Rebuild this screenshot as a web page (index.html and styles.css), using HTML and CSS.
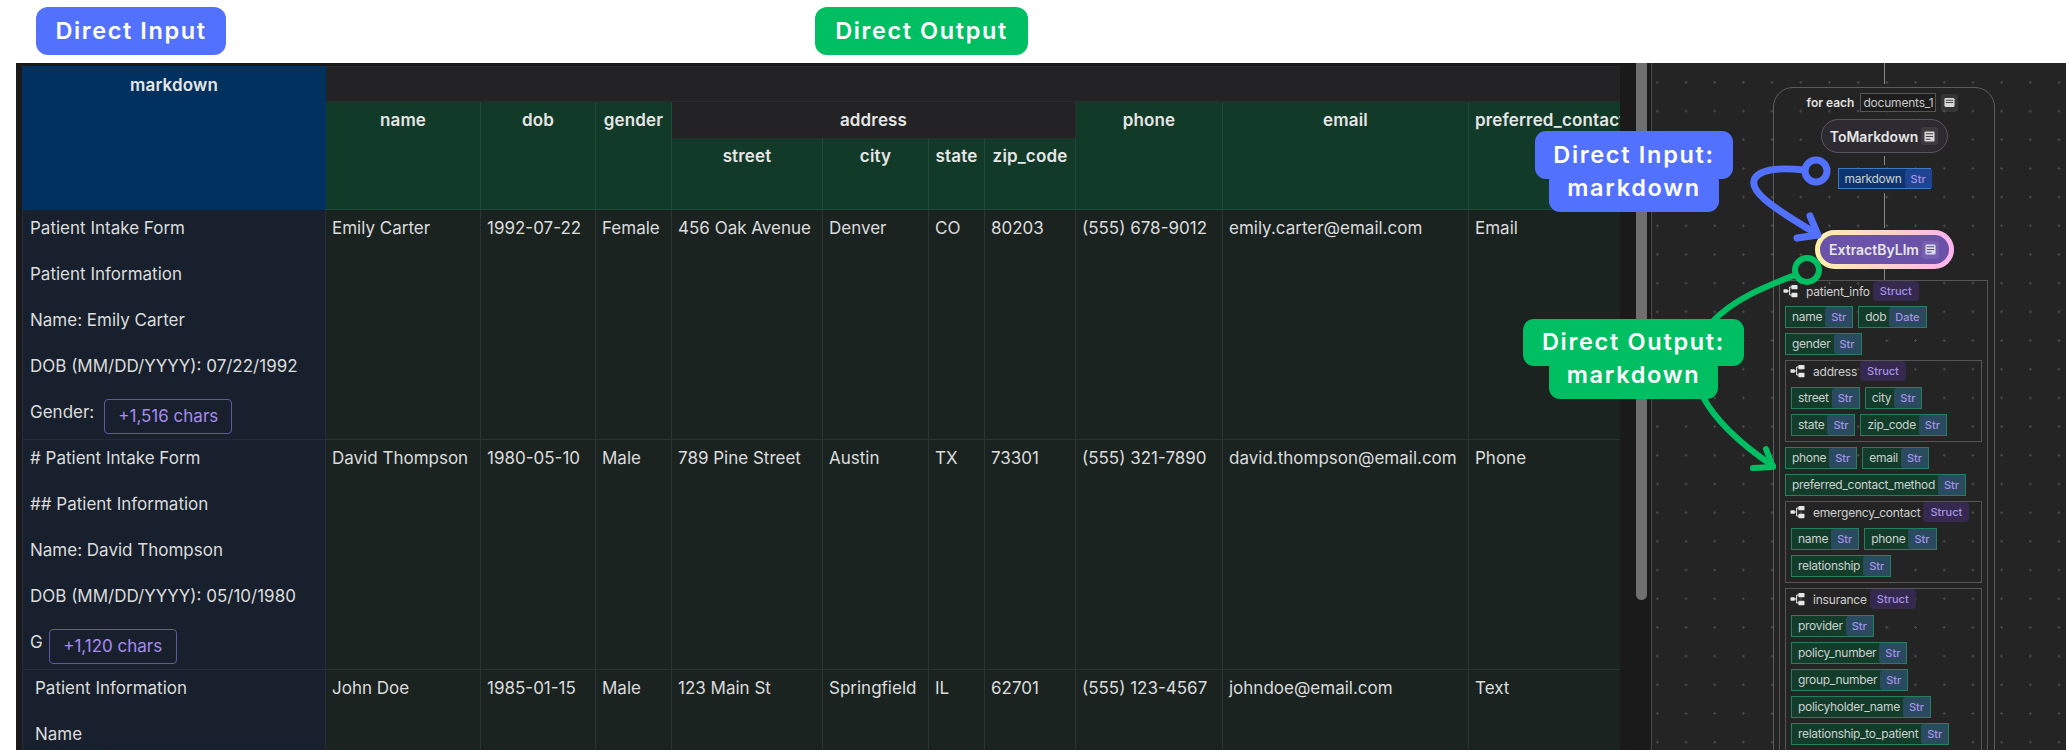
FILE: index.html
```html
<!DOCTYPE html>
<html lang="en">
<head>
  <meta charset="UTF-8" />
  <meta name="viewport" content="width=device-width, initial-scale=1.0" />
  <title>Direct Input and Direct Output</title>

  <link rel="stylesheet" href="styles.css">
</head>
<body>
<!-- Labels above the screenshot -->
<header class="labels">
  <span class="label label-input">Direct Input</span>
  <span class="label label-output">Direct Output</span>
</header>

<main class="app">
  <!-- Results table -->
  <section class="table-pane">
    <table class="results">
      <colgroup>
        <col class="col-markdown">
        <col class="col-name">
        <col class="col-dob">
        <col class="col-gender">
        <col class="col-street">
        <col class="col-city">
        <col class="col-state">
        <col class="col-zip">
        <col class="col-phone">
        <col class="col-email">
        <col class="col-preferred">
      </colgroup>
      <thead>
        <tr class="head-1">
          <th rowspan="3" class="th-input">markdown</th>
          <th colspan="10" class="th-group"></th>
        </tr>
        <tr class="head-2">
          <th rowspan="2" class="th-output">name</th>
          <th rowspan="2" class="th-output">dob</th>
          <th rowspan="2" class="th-output">gender</th>
          <th colspan="4" class="th-group">address</th>
          <th rowspan="2" class="th-output">phone</th>
          <th rowspan="2" class="th-output">email</th>
          <th rowspan="2" class="th-output">preferred_contact_method</th>
        </tr>
        <tr class="head-3">
          <th class="th-output">street</th>
          <th class="th-output">city</th>
          <th class="th-output">state</th>
          <th class="th-output">zip_code</th>
        </tr>
      </thead>
      <tbody>
        <tr class="row-full">
          <td class="td-input">
            <p>Patient Intake Form</p>
            <p>Patient Information</p>
            <p>Name: Emily Carter</p>
            <p>DOB (MM/DD/YYYY): 07/22/1992</p>
            <p>Gender:<span class="more more-wide">+1,516 chars</span></p>
          </td>
          <td>Emily Carter</td>
          <td>1992-07-22</td>
          <td>Female</td>
          <td>456 Oak Avenue</td>
          <td>Denver</td>
          <td>CO</td>
          <td>80203</td>
          <td>(555) 678-9012</td>
          <td>emily.carter@email.com</td>
          <td>Email</td>
        </tr>
        <tr class="row-full">
          <td class="td-input">
            <p># Patient Intake Form</p>
            <p>## Patient Information</p>
            <p>Name: David Thompson</p>
            <p>DOB (MM/DD/YYYY): 05/10/1980</p>
            <p>G<span class="more">+1,120 chars</span></p>
          </td>
          <td>David Thompson</td>
          <td>1980-05-10</td>
          <td>Male</td>
          <td>789 Pine Street</td>
          <td>Austin</td>
          <td>TX</td>
          <td>73301</td>
          <td>(555) 321-7890</td>
          <td>david.thompson@email.com</td>
          <td>Phone</td>
        </tr>
        <tr>
          <td class="td-input td-indent">
            <p>Patient Information</p>
            <p>Name</p>
          </td>
          <td>John Doe</td>
          <td>1985-01-15</td>
          <td>Male</td>
          <td>123 Main St</td>
          <td>Springfield</td>
          <td>IL</td>
          <td>62701</td>
          <td>(555) 123-4567</td>
          <td>johndoe@email.com</td>
          <td>Text</td>
        </tr>
      </tbody>
    </table>
  </section>

  <div class="scrollbar"><div class="thumb"></div></div>

  <!-- Flow graph -->
  <section class="canvas">
    <div class="edge edge-top"></div>
    <div class="foreach">
      <div class="foreach-head">
        <span class="foreach-title">for each</span>
        <span class="foreach-name">documents_1</span>
        <span class="doc-btn"><svg class="doc-icon" viewBox="0 0 12 12"><rect x="0.5" y="1" width="11" height="10" rx="1.5" fill="#d8d8d8"/><path d="M2 3.5h8M2 6h8" stroke="#444" stroke-width="1.2"/></svg></span>
      </div>

      <div class="op op-plain">ToMarkdown<span class="doc-btn"><svg class="doc-icon" viewBox="0 0 12 12"><rect x="0.5" y="0.5" width="11" height="11" rx="1.5" fill="#d8d8d8"/><path d="M2 3h8M2 6h8M2 9h5" stroke="#444" stroke-width="1.1"/></svg></span></div>
      <div class="edge edge-short"></div>
      <div class="field field-input"><span class="field-name">markdown</span><span class="field-type">Str</span></div>
      <div class="edge edge-long"></div>

      <div class="op op-active">
        <div class="op-inner">ExtractByLlm<span class="doc-btn"><svg class="doc-icon" viewBox="0 0 12 12"><rect x="0.5" y="0.5" width="11" height="11" rx="1.5" fill="#d8d8e8"/><path d="M2 3h8M2 6h8M2 9h5" stroke="#5a4a90" stroke-width="1.1"/></svg></span></div>
      </div>
      <div class="edge edge-tiny"></div>

      <div class="struct struct-root">
        <div class="struct-head struct-head-root">
          <svg class="tree-icon" viewBox="0 0 16 16"><rect x="0" y="6" width="5" height="4" rx="1"/><rect x="9" y="1" width="7" height="5" rx="1"/><rect x="9" y="10" width="7" height="5" rx="1"/><path d="M4 8h3M7 3.5v9M7 3.5h3M7 12.5h3" fill="none" stroke="#e6e6e6" stroke-width="1.2"/></svg>
          <span class="struct-name">patient_info</span><span class="struct-type">Struct</span>
        </div>
        <div class="fields">
          <div class="field"><span class="field-name">name</span><span class="field-type">Str</span></div>
          <div class="field"><span class="field-name">dob</span><span class="field-type">Date</span></div>
        </div>
        <div class="fields">
          <div class="field"><span class="field-name">gender</span><span class="field-type">Str</span></div>
        </div>

        <div class="struct">
          <div class="struct-head">
            <svg class="tree-icon" viewBox="0 0 16 16"><rect x="0" y="6" width="5" height="4" rx="1"/><rect x="9" y="1" width="7" height="5" rx="1"/><rect x="9" y="10" width="7" height="5" rx="1"/><path d="M4 8h3M7 3.5v9M7 3.5h3M7 12.5h3" fill="none" stroke="#e6e6e6" stroke-width="1.2"/></svg>
            <span class="struct-name">address</span><span class="struct-type">Struct</span>
          </div>
          <div class="fields">
            <div class="field"><span class="field-name">street</span><span class="field-type">Str</span></div>
            <div class="field"><span class="field-name">city</span><span class="field-type">Str</span></div>
          </div>
          <div class="fields">
            <div class="field"><span class="field-name">state</span><span class="field-type">Str</span></div>
            <div class="field"><span class="field-name">zip_code</span><span class="field-type">Str</span></div>
          </div>
        </div>

        <div class="fields">
          <div class="field"><span class="field-name">phone</span><span class="field-type">Str</span></div>
          <div class="field"><span class="field-name">email</span><span class="field-type">Str</span></div>
        </div>
        <div class="fields">
          <div class="field"><span class="field-name">preferred_contact_method</span><span class="field-type">Str</span></div>
        </div>

        <div class="struct">
          <div class="struct-head">
            <svg class="tree-icon" viewBox="0 0 16 16"><rect x="0" y="6" width="5" height="4" rx="1"/><rect x="9" y="1" width="7" height="5" rx="1"/><rect x="9" y="10" width="7" height="5" rx="1"/><path d="M4 8h3M7 3.5v9M7 3.5h3M7 12.5h3" fill="none" stroke="#e6e6e6" stroke-width="1.2"/></svg>
            <span class="struct-name">emergency_contact</span><span class="struct-type">Struct</span>
          </div>
          <div class="fields">
            <div class="field"><span class="field-name">name</span><span class="field-type">Str</span></div>
            <div class="field"><span class="field-name">phone</span><span class="field-type">Str</span></div>
          </div>
          <div class="fields">
            <div class="field"><span class="field-name">relationship</span><span class="field-type">Str</span></div>
          </div>
        </div>

        <div class="struct">
          <div class="struct-head">
            <svg class="tree-icon" viewBox="0 0 16 16"><rect x="0" y="6" width="5" height="4" rx="1"/><rect x="9" y="1" width="7" height="5" rx="1"/><rect x="9" y="10" width="7" height="5" rx="1"/><path d="M4 8h3M7 3.5v9M7 3.5h3M7 12.5h3" fill="none" stroke="#e6e6e6" stroke-width="1.2"/></svg>
            <span class="struct-name">insurance</span><span class="struct-type">Struct</span>
          </div>
          <div class="fields"><div class="field"><span class="field-name">provider</span><span class="field-type">Str</span></div></div>
          <div class="fields"><div class="field"><span class="field-name">policy_number</span><span class="field-type">Str</span></div></div>
          <div class="fields"><div class="field"><span class="field-name">group_number</span><span class="field-type">Str</span></div></div>
          <div class="fields"><div class="field"><span class="field-name">policyholder_name</span><span class="field-type">Str</span></div></div>
          <div class="fields"><div class="field"><span class="field-name">relationship_to_patient</span><span class="field-type">Str</span></div></div>
        </div>
      </div>
    </div>
  </section>

  <!-- Annotations drawn over the screenshot -->
  <svg class="arrows" viewBox="0 0 2066 753">
    <g fill="none" stroke="#5271ff" stroke-width="7" stroke-linecap="round" stroke-linejoin="round">
      <circle cx="1816" cy="171" r="11"/>
      <path d="M1804 170C1785 168 1762 168 1755 178C1748 190 1768 205 1817 234"/>
      <path d="M1810 216L1818 235L1797 238"/>
    </g>
    <g fill="none" stroke="#00bf63" stroke-width="6" stroke-linecap="round" stroke-linejoin="round">
      <circle cx="1807" cy="270" r="12"/>
      <path d="M1795 275C1765 287 1735 298 1712 322"/>
      <path d="M1703 397C1718 425 1745 447 1773 466"/>
      <path d="M1766 449L1773 467L1753 468"/>
    </g>
  </svg>

  <div class="callout callout-input">
    <div class="callout-top">Direct Input:</div>
    <div class="callout-bottom">markdown</div>
  </div>
  <div class="callout callout-output">
    <div class="callout-top">Direct Output:</div>
    <div class="callout-bottom">markdown</div>
  </div>
</main>
</body>
</html>
```

FILE: styles.css
```css
* {
  box-sizing: border-box;
}

html,
body {
  margin: 0;
  padding: 0;
  height: 753px;
  overflow: hidden;
  background-color: #fff;
  font-family: Inter, "Liberation Sans", sans-serif;
}

/* Top labels */
.labels {
  height: 63px;
  padding: 7px 0 0 36px;
  display: flex;
  gap: 589px;
}

.label {
  height: 48px;
  padding-bottom: 2px;
  border-radius: 12px;
  display: flex;
  align-items: center;
  justify-content: center;
  color: #fff;
  font-size: 23.5px;
  font-weight: 600;
  letter-spacing: 1.6px;
}

.label-input {
  width: 190px;
  background-color: #5271ff;
}

.label-output {
  width: 213px;
  background-color: #00bf63;
}

/* App frame */
.app {
  position: absolute;
  left: 16px;
  top: 63px;
  right: 0;
  height: 687px;
  display: flex;
  background-color: #1a1a1a;
}

.table-pane {
  width: 1604px;
  height: 100%;
  padding: 3px 0 0 6px;
  overflow: hidden;
  flex: none;
}

.results {
  border-collapse: collapse;
  table-layout: fixed;
  width: 1678px;
  color: #dcdcdc;
  font-size: 17px;
  line-height: 24px;
}

.col-markdown { width: 303px; }
.col-name { width: 155px; }
.col-dob { width: 115px; }
.col-gender { width: 76px; }
.col-street { width: 151px; }
.col-city { width: 106px; }
.col-state { width: 56px; }
.col-zip { width: 91px; }
.col-phone { width: 147px; }
.col-email { width: 246px; }
.col-preferred { width: 232px; }

.results th {
  padding: 6px 6px;
  vertical-align: top;
  font-weight: 600;
  letter-spacing: 0.15px;
  color: #e6e6e6;
  white-space: nowrap;
  overflow: hidden;
  border: 1px solid #24382f;
}

.head-1 { height: 35px; }
.head-2 { height: 35px; }
.head-3 { height: 71px; }

.results .head-3 th {
  padding-top: 5px;
}

.results th.th-input {
  background-color: #01315f;
  border-color: #01315f;
}

.results th.th-output {
  background-color: #123a28;
  border-color: #21493a;
}

.results th.th-group {
  background-color: #232325;
  border-color: #2b2b2d;
}

.results td {
  padding: 6px 6px;
  vertical-align: top;
  white-space: nowrap;
  overflow: hidden;
  background-color: #1b2321;
  border: 1px solid #2a3531;
}

.row-full {
  height: 230px;
}

.results td.td-input {
  padding-left: 7px;
  background-color: #17202c;
  border-color: #232c38;
}

.results td.td-indent {
  padding-left: 12px;
}

.td-input p {
  margin: 0 0 22px;
  height: 24px;
}

.td-input p:last-child {
  margin-bottom: 0;
}

.more {
  display: inline-block;
  width: 128px;
  height: 35px;
  margin-left: 6px;
  vertical-align: top;
  position: relative;
  top: -1px;
  line-height: 33px;
  text-align: center;
  color: #a78bf0;
  border: 1px solid #5f58a8;
  border-radius: 4px;
}

.more-wide {
  margin-left: 10px;
}

/* Scrollbar between the panes */
.scrollbar {
  width: 32px;
  flex: none;
  padding: 0 4px 0 16px;
  border-right: 1px solid #4a4a4a;
}

.thumb {
  height: 537px;
  background-color: #6f6f6f;
  border-radius: 0 0 6px 6px;
}

/* Flow graph */
.canvas {
  flex: 1;
  position: relative;
  overflow: hidden;
  background-color: #242424;
  background-image: radial-gradient(circle, #4a4a4a 1px, transparent 1.4px);
  background-size: 28.7px 28.7px;
  background-position: -9px 5px;
}

.edge {
  width: 1px;
  background-color: #8a8a8a;
  margin: 0 auto;
}

.edge-top {
  position: absolute;
  left: 232px;
  top: 0;
  height: 21px;
}

.foreach {
  position: absolute;
  left: 121px;
  top: 24px;
  width: 222px;
  height: 720px;
  padding: 5px 5px 0;
  border: 1px solid #5c5c60;
  border-radius: 20px;
  display: flex;
  flex-direction: column;
  align-items: center;
}

.foreach-head {
  display: flex;
  align-items: center;
  height: 19px;
  margin: 0 0 7px -3px;
  color: #e0e0e0;
  font-size: 12px;
}

.foreach-title {
  font-weight: 600;
  margin-right: 6px;
  white-space: nowrap;
}

.foreach-name {
  width: 76px;
  height: 19px;
  line-height: 17px;
  text-align: center;
  font-size: 12px;
  letter-spacing: -0.2px;
  color: #c8c8c8;
  border: 1px solid #555;
  background-color: #1d1d1d;
}

.doc-btn {
  width: 17px;
  height: 18px;
  margin-left: 5px;
  border-radius: 3px;
  background-color: rgba(255, 255, 255, 0.08);
  display: inline-flex;
  align-items: center;
  justify-content: center;
}

.doc-icon {
  width: 11px;
  height: 11px;
}

.op {
  display: flex;
  align-items: center;
  justify-content: center;
  color: #e6e6e6;
  font-size: 14px;
  font-weight: 600;
  white-space: nowrap;
}

.op-plain {
  width: 127px;
  height: 34px;
  border-radius: 17px;
  background-color: #2d2b31;
  border: 1px solid #58565c;
}

.op-plain .doc-btn {
  margin-left: 3px;
}

.edge-short {
  height: 9px;
  margin-top: 3px;
  margin-bottom: 3px;
}

.edge-long {
  height: 35px;
  margin-top: 4px;
  margin-bottom: 2px;
}

.edge-tiny {
  height: 11px;
  flex: none;
}

.op-active {
  width: 139px;
  height: 39px;
  padding: 5px;
  border-radius: 20px;
  background: linear-gradient(90deg, #fff1a8, #ffb3ee);
}

.op-inner {
  width: 100%;
  height: 100%;
  border-radius: 15px;
  background-color: #6a52a8;
  display: flex;
  align-items: center;
  justify-content: center;
}

.op-inner .doc-btn {
  margin-left: 3px;
}

/* Struct blocks and fields */
.struct {
  border: 1px solid #555;
  padding: 0 5px;
  margin: 0 0 5px;
  width: 197px;
}

.struct-root {
  flex: none;
  width: 209px;
  margin: 0;
  padding: 0 5px;
  align-self: flex-start;
}

.struct-head {
  display: flex;
  align-items: center;
  height: 20px;
  margin-bottom: 6px;
}

.struct-head-root {
  margin: 0 0 5px -1px;
}

.tree-icon {
  width: 15px;
  height: 14px;
  fill: #e6e6e6;
  margin: 0 8px 0 -1px;
  flex: none;
}

.struct-name {
  color: #cfcfcf;
  font-size: 12px;
  letter-spacing: -0.2px;
  white-space: nowrap;
  margin-right: 3px;
}

.struct-type {
  height: 20px;
  padding: 0 7px;
  line-height: 20px;
  border-radius: 4px;
  background-color: #35294f;
  color: #a692e8;
  font-size: 11px;
  font-weight: 500;
}

.fields {
  display: flex;
  gap: 5px;
  margin-bottom: 5px;
}

.field {
  height: 22px;
  display: flex;
  align-items: stretch;
  border: 1px solid #22805a;
  background-color: #143c2b;
  white-space: nowrap;
}

.field-name {
  padding: 0 3px 0 6px;
  line-height: 20px;
  font-size: 12px;
  letter-spacing: -0.3px;
  color: #c9d2ce;
}

.field-type {
  padding: 0 6px;
  line-height: 20px;
  font-size: 11px;
  font-weight: 500;
  color: #a692e8;
  background-color: #2a4a60;
  border-radius: 3px 0 0 3px;
}

.field-input {
  height: 21px;
  width: 93px;
  background-color: #0d3470;
  border-color: #3a7bc8;
  flex: none;
}

.field-input .field-type {
  background-color: #1f4592;
}

/* Annotations */
.arrows {
  position: absolute;
  left: -16px;
  top: -63px;
  width: 2066px;
  height: 753px;
  pointer-events: none;
}

.callout {
  position: absolute;
  display: flex;
  flex-direction: column;
  align-items: center;
  color: #fff;
  font-size: 23.5px;
  font-weight: 600;
  letter-spacing: 1.7px;
}

.callout-top,
.callout-bottom {
  display: flex;
  justify-content: center;
  border-radius: 11px;
  white-space: nowrap;
}

.callout-input {
  left: 1519px;
  top: 68px;
  width: 198px;
}

.callout-input .callout-top {
  width: 198px;
  height: 48px;
  padding-top: 9px;
  background-color: #5271ff;
}

.callout-input .callout-bottom {
  width: 170px;
  height: 41px;
  margin-top: -8px;
  padding-top: 2px;
  background-color: #5271ff;
}

.callout-output {
  left: 1507px;
  top: 256px;
  width: 221px;
}

.callout-output .callout-top {
  width: 221px;
  height: 47px;
  padding-top: 8px;
  background-color: #00bf63;
}

.callout-output .callout-bottom {
  width: 169px;
  height: 41px;
  margin-top: -8px;
  padding-top: 2px;
  background-color: #00bf63;
}
```
